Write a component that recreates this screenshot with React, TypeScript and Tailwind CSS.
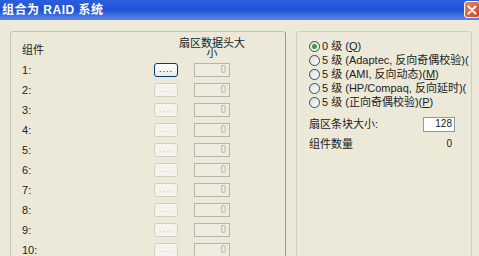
import React from "react";

const font = { fontFamily: '"Liberation Sans", "Noto Sans CJK SC", sans-serif' };

function DotsButton({ enabled }: { enabled?: boolean }) {
  return (
    <div
      className={
        enabled
          ? "w-[24px] h-[14px] rounded-[3px] border border-[#003C74] bg-gradient-to-b from-white to-[#ECEBE6] flex items-center justify-center text-[9px] leading-none text-[#222]"
          : "w-[24px] h-[14px] rounded-[3px] border border-[#D2CFC0] bg-[#F4F3EE] flex items-center justify-center text-[9px] leading-none text-[#C4C1B2]"
      }
    >
      <span className="-mt-[2px] tracking-[1px]">....</span>
    </div>
  );
}

function Row({ n, first }: { n: number; first?: boolean }) {
  return (
    <div className="h-[20px] flex items-center">
      <div className="w-[132px] text-[11px] leading-none text-[#222] pt-[1px]">{n}:</div>
      <DotsButton enabled={first} />
      <div className="ml-[16px] w-[36px] h-[14px] border border-[#B8B5A6] bg-[#EEECE0] flex items-center justify-end pr-[3px] text-[10px] leading-none text-[#B8B5A6]">
        0
      </div>
    </div>
  );
}

function Radio({ checked, children }: { checked?: boolean; children: React.ReactNode }) {
  return (
    <div className="h-[14px] flex items-center whitespace-nowrap">
      <div className="w-[11px] h-[11px] rounded-full border border-[#1C5180] bg-gradient-to-br from-[#DCDBD3] to-white flex items-center justify-center shrink-0">
        {checked && <div className="w-[5px] h-[5px] rounded-full bg-[#2BA82B]" />}
      </div>
      <div className="ml-[2px] text-[11px] leading-none text-[#222]">{children}</div>
    </div>
  );
}

export default function App() {
  return (
    <div className="w-[479px] h-[256px] overflow-hidden bg-[#ECE9D8] flex flex-col" style={font}>
      <div className="h-[20px] shrink-0 bg-gradient-to-b from-[#2A5FDE] via-[#1F52D4] to-[#5C86E6] flex items-center justify-between">
        <div className="pl-[2px] text-[12px] font-bold text-white leading-none tracking-[0.5px]">组合为 RAID 系统</div>
        <div className="w-[16px] h-[17px] mr-[-1px] self-start mt-[1px] rounded-[3px] border border-white bg-gradient-to-br from-[#E9846A] to-[#D4401E] flex items-center justify-center">
          <svg width="10" height="10" viewBox="0 0 10 10">
            <path d="M1.5 1.5 L8.5 8.5 M8.5 1.5 L1.5 8.5" stroke="white" strokeWidth="2" strokeLinecap="round" />
          </svg>
        </div>
      </div>
      <div className="flex pt-[11px] pl-[10px]">
        <div className="w-[276px] h-[240px] shrink-0 rounded-[3px] border border-[#C5C2B2] border-r-[#9D9A8C] pl-[11px] pt-[6px]">
          <div className="h-[22px] flex">
            <div className="w-[154px] mt-[6px] text-[11px] leading-[12px] text-[#222]">组件</div>
            <div className="w-[72px] ml-[0px] text-center text-[11px] leading-[10px] text-[#222]">扇区数据头大小</div>
          </div>
          {[1, 2, 3, 4, 5, 6, 7, 8, 9, 10].map((n) => (
            <Row key={n} n={n} first={n === 1} />
          ))}
        </div>
        <div className="ml-[10px] w-[176px] h-[240px] shrink-0 rounded-[3px] border border-[#D0CEBF] pl-[12px] pt-[7px] overflow-hidden">
          <Radio checked>
            0 级 (<span className="underline">Q</span>)
          </Radio>
          <Radio>5 级 (Adaptec, 反向奇偶校验)(</Radio>
          <Radio>
            5 级 (AMI, 反向动态)(<span className="underline">M</span>)
          </Radio>
          <Radio>5 级 (HP/Compaq, 反向延时)(</Radio>
          <Radio>
            5 级 (正向奇偶校验)(<span className="underline">P</span>)
          </Radio>
          <div className="mt-[7px] h-[16px] flex items-center justify-between pr-[16px]">
            <div className="text-[11px] leading-none text-[#222]">扇区条块大小:</div>
            <div className="w-[32px] h-[15px] border border-[#7F9DB9] bg-white flex items-center justify-end pr-[2px] text-[10px] leading-none text-[#222]">
              128
            </div>
          </div>
          <div className="mt-[5px] h-[14px] flex items-center justify-between pr-[19px]">
            <div className="text-[11px] leading-none text-[#222]">组件数量</div>
            <div className="text-[10px] leading-none text-[#222]">0</div>
          </div>
        </div>
      </div>
    </div>
  );
}
